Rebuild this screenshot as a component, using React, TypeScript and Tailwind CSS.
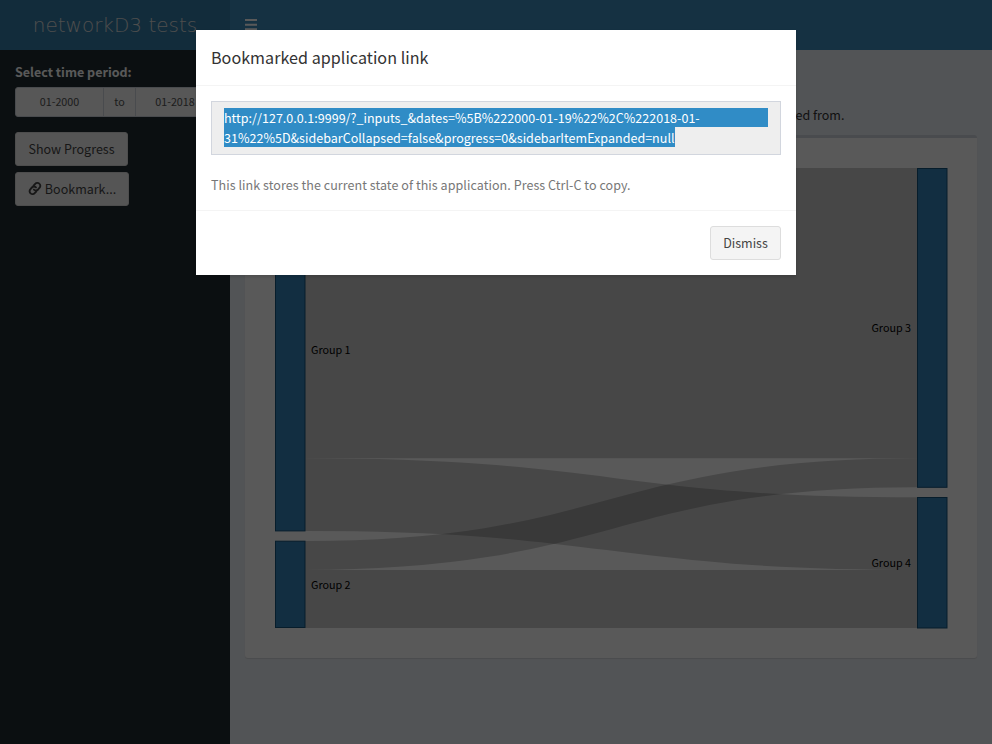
import React from "react";

const node = { width: 29.5, fill: "#1f77b4", fillOpacity: 0.9, stroke: "#15537d" };

function Sankey() {
  return (
    <svg width="692" height="480" viewBox="265 158 692 480" className="block font-['Noto_Sans_CJK_SC',sans-serif] text-[10.75px]">
      <g fill="none" stroke="#000" strokeOpacity="0.2">
        <path d="M305,313.16C611,313.16 611,313.16 917,313.16" strokeWidth="290.32" />
        <path d="M305,494.61C611,494.61 611,533.64 917,533.64" strokeWidth="72.58" />
        <path d="M305,555.42C611,555.42 611,472.84 917,472.84" strokeWidth="29.03" />
        <path d="M305,598.97C611,598.97 611,598.97 917,598.97" strokeWidth="58.06" />
      </g>
      <rect x="275.5" y="168.5" height="362.4" {...node} />
      <rect x="275.5" y="541.2" height="86.3" {...node} />
      <rect x="917.5" y="168.5" height="318.8" {...node} />
      <rect x="917.5" y="497.5" height="130.5" {...node} />
      <text x="311" y="354">Group 1</text>
      <text x="311" y="589">Group 2</text>
      <text x="911" y="332" textAnchor="end">Group 3</text>
      <text x="911" y="567" textAnchor="end">Group 4</text>
    </svg>
  );
}

function ChainIcon() {
  return (
    <svg width="14" height="15" viewBox="0 0 14 15" fill="none" stroke="currentColor" strokeWidth="1.9" strokeLinecap="round" className="-mt-0.5">
      <path d="M5.9 8.6a2.9 2.9 0 0 0 4.2-.1l1.5-1.8a2.9 2.9 0 0 0-.3-4.1a2.9 2.9 0 0 0-4.1.2l-1.6 1.9" />
      <path d="M8 6.4a2.9 2.9 0 0 0-4.1.1l-1.6 1.8a2.9 2.9 0 0 0 .3 4.1a2.9 2.9 0 0 0 4.1-.2l1.5-1.7" />
    </svg>
  );
}

function Sidebar() {
  return (
    <aside className="flex w-[230px] shrink-0 flex-col items-start bg-[#222d32] pl-[15px] pt-3">
      <label className="h-[25px] text-[12.53px] font-bold leading-5 text-white">Select time period:</label>
      <div className="flex h-[30px] w-[200px] overflow-hidden rounded-[3px] border border-[#d2d6de] bg-[#f8f8f8] text-center text-[10.75px] leading-7 text-[#555]">
        <div className="w-[87px]">01-2000</div>
        <div className="w-[33px] border-x border-[#d2d6de]">to</div>
        <div className="flex-1">01-2018</div>
      </div>
      <button className="mt-[15px] h-[34px] w-[113px] rounded-[3px] border border-[#ddd] bg-[#f4f4f4] text-[12.53px] leading-5 text-[#444]">Show Progress</button>
      <button className="mt-1.5 flex h-[34px] w-[114px] items-center justify-center gap-[3px] rounded-[3px] border border-[#ddd] bg-[#f4f4f4] text-[12.53px] leading-5 text-[#444]">
        <ChainIcon />
        <span>Bookmark...</span>
      </button>
    </aside>
  );
}

function Modal() {
  return (
    <div className="absolute left-[196px] top-[30px] flex h-[245px] w-[600px] flex-col bg-white shadow-[0_2px_3px_rgba(0,0,0,0.125)]">
      <h4 className="h-14 border-b border-[#f4f4f4] px-[15px] pt-[14px] text-[16.12px] leading-[26px] tracking-[0.03px] text-[#333]">Bookmarked application link</h4>
      <div className="h-[124px] p-[15px]">
        <div className="h-[54px] whitespace-nowrap border border-[#d2d6de] bg-[#eee] px-3 py-1.5 text-[12.53px] tracking-[0.02px] text-white">
          <div className="h-[19px] bg-[#308cc6] leading-5">http://127.0.0.1:9999/?_inputs_&amp;dates=%5B%222000-01-19%22%2C%222018-01-</div>
          <div className="h-5 w-[451px] bg-[#308cc6] leading-[22px]">31%22%5D&amp;sidebarCollapsed=false&amp;progress=0&amp;sidebarItemExpanded=null</div>
        </div>
        <p className="mt-5 text-[12.53px] leading-5 tracking-[0.055px] text-[#777]">This link stores the current state of this application. Press Ctrl-C to copy.</p>
      </div>
      <div className="flex h-[65px] justify-end border-t border-[#f4f4f4] p-[15px]">
        <button className="h-[34px] w-[71px] rounded-[3px] border border-[#ddd] bg-[#f4f4f4] text-[12.53px] leading-5 text-[#444]">Dismiss</button>
      </div>
    </div>
  );
}

export default function App() {
  return (
    <div className="relative h-[744px] w-[992px] overflow-hidden font-['Noto_Sans_CJK_SC',sans-serif]">
      <div className="flex h-full flex-col">
        <header className="flex h-[50px] shrink-0 bg-[#3c8dbc]">
          <div className="w-[230px] bg-[#367fa9] text-center font-['DejaVu_Sans',sans-serif] text-[20px] font-extralight leading-[50px] text-[#ddd]">networkD3 tests</div>
          <svg className="ml-[15px] mt-[19px]" width="12" height="12" fill="#fff">
            <path d="M0 0h12v2H0zM0 4.7h12v2H0zM0 9.3h12v2H0z" />
          </svg>
        </header>
        <div className="flex min-h-0 flex-1">
          <Sidebar />
          <main className="flex-1 bg-[#ecf0f5] px-[15px] pt-[55px]">
            <p className="h-[30px] pl-[550.5px] text-[12.53px] leading-5 text-[#333]">ed from.</p>
            <section className="h-[523px] rounded-[3px] border-t-[3px] border-[#d2d6de] bg-white px-5 py-5 shadow-[0_1px_1px_rgba(0,0,0,0.1)]">
              <Sankey />
            </section>
          </main>
        </div>
      </div>
      <div className="absolute inset-0 bg-black/65" />
      <Modal />
    </div>
  );
}
